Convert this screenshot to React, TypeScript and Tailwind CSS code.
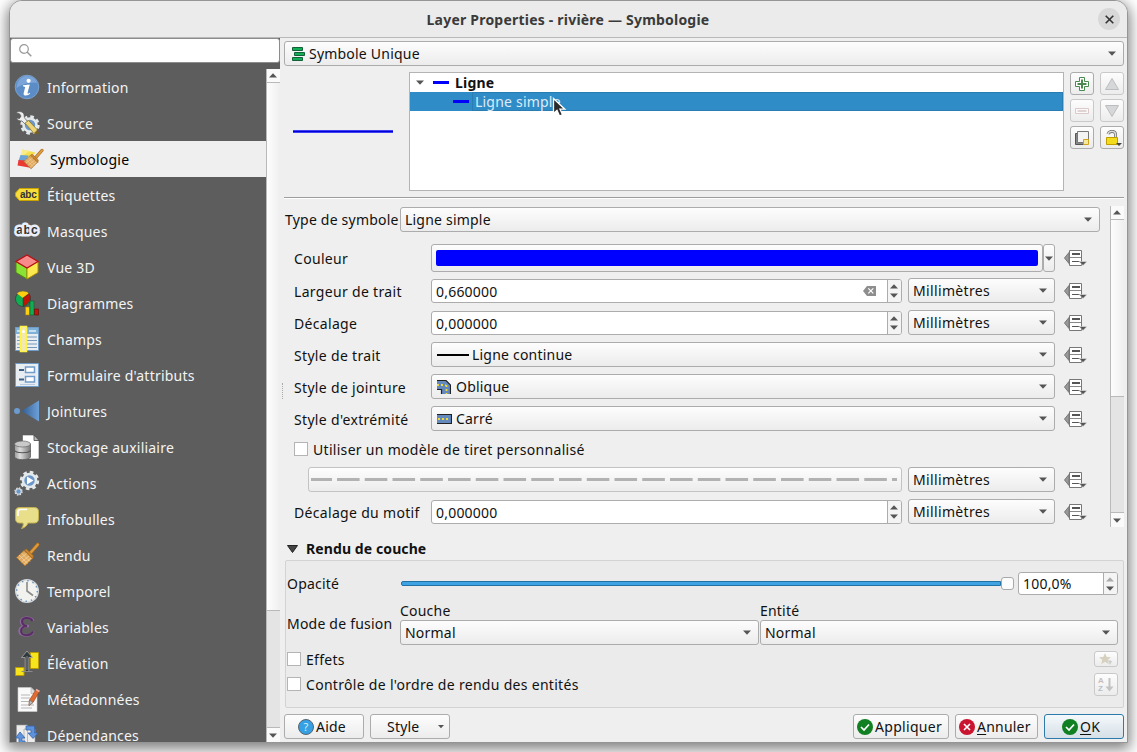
import React from "react";

const frame = "border border-[#acacac] rounded-[3px]";
const raised = "bg-gradient-to-b from-[#fdfdfd] to-[#ececec]";

function Down({ className = "" }: { className?: string }) {
  return (
    <svg className={"shrink-0 " + className} width="8" height="5" viewBox="0 0 8 5">
      <path d="M0 0.5h8L4 4.8z" fill="#555" />
    </svg>
  );
}

function Up({ className = "", fill = "#555" }: { className?: string; fill?: string }) {
  return (
    <svg className={"shrink-0 " + className} width="8" height="5" viewBox="0 0 8 5">
      <path d="M0 4.5h8L4 0.2z" fill={fill} />
    </svg>
  );
}

function Combo({ className = "", children }: { className?: string; children?: React.ReactNode }) {
  return (
    <div className={`flex h-[25px] shrink-0 items-center pl-1 pr-[7px] ${frame} ${raised} ${className}`}>
      {children}
      <Down className="ml-auto" />
    </div>
  );
}

function Spin({ className = "", value, clear, maxed }: { className?: string; value: string; clear?: boolean; maxed?: boolean }) {
  return (
    <div className={`flex shrink-0 items-stretch overflow-hidden bg-white ${frame} ${className}`}>
      <span className="flex items-center pl-1 pt-px">{value}</span>
      {clear && (
        <svg className="ml-auto mr-[11px] self-center" width="13" height="10" viewBox="0 0 13 10">
          <path d="M4 0h9v10H4L0 5z" fill="#8e8e8e" />
          <path d="M5.3 2.3l5 5M10.3 2.3l-5 5" stroke="#fff" strokeWidth="1.2" />
        </svg>
      )}
      <div className={(clear ? "" : "ml-auto ") + "flex w-[14px] flex-col items-center justify-center gap-1 border-l border-[#acacac] bg-[#f4f4f4] pr-[2px]"}>
        <Up fill={maxed ? "#aaa" : "#555"} />
        <Down />
      </div>
    </div>
  );
}

function DataDefined({ className = "mt-[2px]" }: { className?: string }) {
  return (
    <svg className={"ml-[9px] shrink-0 " + className} width="24" height="17" viewBox="0 0 24 17">
      <path d="M5 2.5L0.5 8L5 13.5z" fill="#999" stroke="#777" />
      <path d="M5.5 0.5h12v15h-12z" fill="#fff" stroke="#777" />
      <path d="M6 7.5h11" stroke="#888" />
      <path d="M8 4h8" stroke="#555" strokeWidth="2" />
      <path d="M8 11.5h8" stroke="#555" />
      <path d="M15 11.5h8L19 15.500z" fill="#555" stroke="#efefef" strokeWidth="0.5" />
    </svg>
  );
}

function Check({ label, className = "" }: { label: string; className?: string }) {
  return (
    <div className={"flex h-[14px] items-center gap-[5px] " + className}>
      <span className="h-[14px] w-[14px] border border-[#b4b4b4] bg-white" />
      <span className="pt-[2px] tracking-[0.3px]">{label}</span>
    </div>
  );
}

function Row({ label, className = "", labelClass = "pt-[3px]", children }: { label: string; className?: string; labelClass?: string; children: React.ReactNode }) {
  return (
    <div className={"flex shrink-0 items-center " + className}>
      <span className={"w-[137px] shrink-0 whitespace-nowrap tracking-[0.32px] " + labelClass}>{label}</span>
      {children}
    </div>
  );
}

function ScrollBar({ thumb }: { thumb: string }) {
  return (
    <div className="flex w-[14px] shrink-0 flex-col border-l border-[#b9b9b9] bg-[#e4e4e4]">
      <div className="flex h-[14px] shrink-0 items-center justify-center border-b border-[#b9b9b9] bg-[#fafafa] pr-px">
        <Up />
      </div>
      <div className={"shrink-0 border-b border-[#b9b9b9] bg-gradient-to-r from-[#fdfdfd] to-[#efefef] " + thumb} />
      <div className="mt-auto flex h-[15px] shrink-0 items-center justify-center border-t border-[#b9b9b9] bg-[#fafafa] pr-px">
        <Down />
      </div>
    </div>
  );
}

const gear = (
  <>
    <circle r="8.4" fill="none" stroke="#e3e8ea" strokeWidth="2.6" strokeDasharray="3.6 3" />
    <circle r="6.5" fill="#6a96c8" stroke="#e3e8ea" strokeWidth="2.6" />
  </>
);

const broom = (
  <>
    <path d="M14 11.500L22.800 1.500" stroke="#a8691c" strokeWidth="3.600" strokeLinecap="round" />
    <path d="M14 11.500L22.800 1.500" stroke="#dd9c40" strokeWidth="2.200" strokeLinecap="round" />
    <path d="M9 7.500l8.500 8-7.500 7.500-8.500-8.500z" fill="#dfa85e" stroke="#a8712b" strokeWidth="0.8" />
    <path d="M9.500 7l2-.8 6.800 6.500-.5 3z" fill="#cf8a30" stroke="#a8691c" strokeWidth="0.8" />
    <path d="M4 12l8.500 8.500M6.500 10l8.500 8.500M4 16.500l7.500-6M6.500 19l7.500-6M9 21l7-6" stroke="#f3d5a4" strokeWidth="0.7" />
  </>
);

const icons: Record<string, React.ReactNode> = {
  Information: (
    <>
      <circle cx="12" cy="12" r="11.8" fill="#5b8cc6" stroke="#81a9d8" strokeWidth="0.8" />
      <path d="M1.5 13C2 5 7 1 12 1s9 3 10 7C14 7 8 9 1.500 13z" fill="#7ba5d8" />
      <circle cx="13.6" cy="5.8" r="2.1" fill="#fff" />
      <path d="M8 10.2l6.8-.8-2.300 8.600c0 .9 1 .8 2.200-.3l.5.8c-2 2.600-7.600 2.900-6.500-.6l1.500-6-2.300-.6z" fill="#fff" />
    </>
  ),
  Source: (
    <>
      <g transform="translate(15 14)">{gear}</g>
      <path d="M1 2c3-2.500 7-1.500 8 1.500.5 2 0 3 1 4l3 3.500-2.500 2.500-3.500-3.500C5 10 2.500 9.500 1 7l3.500.5L6 5 4.500 2.800z" fill="#eee" stroke="#555" strokeWidth="0.7" />
      <path d="M10 12l3.500-2.500 9 9.500-3.500 3.500z" fill="#ecd477" stroke="#8b7628" strokeWidth="0.8" />
      <path d="M22.500 19l1.500 4-5-.5z" fill="#7a6020" />
    </>
  ),
  Symbologie: (
    <>
      <path d="M4.500 2.500l13 3-4 5-11-1z" fill="#f7e04e" />
      <path d="M4.500 2.500l7 1.500-8 5.500-1-.5z" fill="#faec8c" />
      <path d="M2.500 8l8 .5-2 6.500-8-1z" fill="#6ba3d4" />
      <path d="M.5 13l7 .5 6 7.500-8-1.500-6-1z" fill="#ea3a34" />
      <g transform="translate(4.500 2) scale(.86)">{broom}</g>
    </>
  ),
  Étiquettes: (
    <>
      <path d="M4.500 5.500h19v12h-19L0.500 13v-3z" fill="#f6dd3c" stroke="#c9a400" />
      <text x="5" y="15" fontFamily="Liberation Sans, sans-serif" fontWeight="700" fontSize="10" textLength="17" fill="#333">abc</text>
    </>
  ),
  Masques: (
    <text x="1.300" y="15" fontFamily="Liberation Sans, sans-serif" fontWeight="700" fontSize="12" letterSpacing="0" textLength="21.500" fill="#333" stroke="#e9effa" strokeWidth="5" strokeLinejoin="round" paintOrder="stroke">abc</text>
  ),
  "Vue 3D": (
    <>
      <path d="M1 6.500l11 6v11.500L1 17.500z" fill="#8ae234" stroke="#4e8a10" />
      <path d="M23 6.500l-11 6v11.500l11-6.500z" fill="#fce94f" stroke="#b09000" />
      <path d="M12 0l11 6.500-11 6.500L1 6.500z" fill="#f78b8b" stroke="#b80f14" strokeWidth="1.300" />
    </>
  ),
  Diagrammes: (
    <>
      <circle cx="8" cy="8" r="7.500" fill="#0fae53" stroke="#333" strokeWidth="0.6" />
      <path d="M8 7L2 2.500C5-.5 11-.5 14 2.500z" fill="#ffcf0f" />
      <path d="M8 7l6-4.500c3 4 1 10-6 13z" fill="#c01408" stroke="#333" strokeWidth="0.500" />
      <path d="M10.500 16h4v8h-4z" fill="#ffcf0f" stroke="#a77b00" strokeWidth="0.6" />
      <path d="M15 10h4v14h-4z" fill="#0fae53" stroke="#105a2e" strokeWidth="0.6" />
      <path d="M19.500 18h4v6h-4z" fill="#c01408" stroke="#5e0c05" strokeWidth="0.6" />
    </>
  ),
  Champs: (
    <>
      <path d="M.5.5h23v23H.5z" fill="#e8edf1" stroke="#6f9cc9" />
      <path d="M1 1h22v6H1z" fill="#7fb0d8" />
      <path d="M2 4h9M14 4h7" stroke="#c5dff0" strokeWidth="2" />
      <path d="M2 10h20M2 13.500h20M2 17h20M2 20.500h20" stroke="#7497bf" />
      <path d="M5.500-.5h6v25h-6z" fill="#f1e9b1" stroke="#fff34a" strokeWidth="1.600" />
      <circle cx="8.500" cy="4.500" r="1.500" fill="#fff" />
    </>
  ),
  "Formulaire d'attributs": (
    <>
      <path d="M.5.5h23v23H.5z" fill="#e8edf1" stroke="#6f9cc9" />
      <path d="M4 7h5M4 16.500h5" stroke="#3f5f82" strokeWidth="2.200" />
      <path d="M10.500 4h9v5.500h-9zM10.500 13.500h9V19h-9z" fill="#fff" stroke="#6f9cc9" strokeWidth="1.500" />
      <path d="M5 21.500h15" stroke="#b8cbe0" />
    </>
  ),
  Jointures: (
    <>
      <defs>
        <linearGradient id="join"><stop stopColor="#315d92" /><stop offset="1" stopColor="#6ea0d8" /></linearGradient>
      </defs>
      <circle cx="2" cy="12" r="3" fill="#6c9bd0" />
      <path d="M6.500 12L24 1.500v21z" fill="url(#join)" />
    </>
  ),
  "Stockage auxiliaire": (
    <>
      <defs>
        <linearGradient id="cyl"><stop stopColor="#999" /><stop offset=".35" stopColor="#ddd" /><stop offset="1" stopColor="#777" /></linearGradient>
      </defs>
      <path d="M7.500 0H19l5 5.500V24H7.500z" fill="#fff" stroke="#555" strokeWidth="0.6" />
      <path d="M19 0v5.500h5z" fill="#bbb" stroke="#444" strokeWidth="0.8" />
      <path d="M-.5 9v13c1 3.500 15 3.500 16 0V9z" fill="url(#cyl)" stroke="#555" strokeWidth="0.7" />
      <ellipse cx="7.500" cy="9" rx="8" ry="3" fill="#c9c9c9" stroke="#666" strokeWidth="0.7" />
      <path d="M-.5 15.500c2 3 14 3 16 0" fill="none" stroke="#555" strokeWidth="1.200" />
    </>
  ),
  Actions: (
    <>
      <g transform="translate(14.500 9.500)">{gear}</g>
      <path d="M12 5.500l6.500 4-6.500 4z" fill="#fff" />
      <g transform="translate(3.500 20.500) scale(.43)">{gear}</g>
    </>
  ),
  Infobulles: (
    <>
      <path d="M4.500.5h15c3 0 4 2 4 4v7c0 3-1.500 4.500-4 4.500H13c-1 3-4 5-6.500 5.500C8 19.500 8.500 18 8 16H4.500c-3 0-4-2-4-4.500v-7c0-2.500 1.500-4 4-4z" fill="#e9df8b" stroke="#c4b14f" />
      <path d="M3 9V5c0-1.500 1-2.500 2.500-2.500H12" fill="none" stroke="#fff" strokeWidth="1.700" />
    </>
  ),
  Rendu: broom,
  Temporel: (
    <>
      <circle cx="12" cy="12" r="11.300" fill="#f2f3ee" stroke="#d5d9dc" strokeWidth="1.400" />
      <circle cx="12" cy="12" r="10.300" fill="none" stroke="#6591bd" strokeWidth="1.500" strokeDasharray="1.400 3.990" />
      <path d="M12 3v9l6 4.500" fill="none" stroke="#8a8a8a" strokeWidth="1.600" />
    </>
  ),
  Variables: (
    <>
      <path d="M18 6c0-4-12-5-12 .5C6 9 8.500 11 12 11c-4 0-7.500 1.500-7.500 5 0 6.500 13.500 5 13.500.5M9 11h5" fill="none" stroke="#8e6a9b" strokeWidth="2.600" />
      <path d="M17.500 6c-2-4-10.500-4-10.500.5C7 9 9.500 11 12 11c-3 0-6 1.500-6 5 0 6 10 5 12 .500" fill="none" stroke="#5a2d67" strokeWidth="2" />
    </>
  ),
  Élévation: (
    <>
      <path d="M15.500 1.500h8v16h-8z" fill="#f7e41c" stroke="#b79b00" />
      <path d="M.5 16.500H9v8H.5z" fill="#f7e41c" stroke="#b79b00" />
      <path d="M10.200 20.500V6.500H6.500L12 0l5.500 6.500h-3.700v14z" fill="#30393c" stroke="#aaa" strokeWidth="0.8" />
      <path d="M12 5v14M6.500 20.500h11" stroke="#888" strokeWidth="1" />
    </>
  ),
  Métadonnées: (
    <>
      <path d="M3 .5h13l6 6V24.500H3z" fill="#fafafa" stroke="#ccc" strokeWidth="0.600" />
      <path d="M16 .5v6h6z" fill="#ddd" stroke="#aaa" strokeWidth="0.6" />
      <path d="M6 8h9M6 11h9M6 14.500h13M6 18h13M6 21h11" stroke="#b6b6b6" strokeWidth="1.200" />
      <path d="M21 2.500l3.500 2L18 15.500l-4 3 .5-5.500z" fill="#de6b31" stroke="#9b4215" strokeWidth="0.6" />
      <path d="M14.500 13l3.500 2.500-4 3z" fill="#bbb" stroke="#666" strokeWidth="0.500" />
      <path d="M21 2.500l3.500 2" stroke="#f1b2a0" strokeWidth="1.500" />
    </>
  ),
  Dépendances: (
    <>
      <path d="M1.500 2h11v19h-11zM9 6h11v18H9z" fill="#ececec" stroke="#999" strokeWidth="0.6" />
      <path d="M11 3h8.500v7h3.500l-5 5.500-5-5.500h3V7h-5z" fill="#5e93dc" stroke="#3565ad" strokeWidth="0.8" />
      <path d="M10 22.500H4V15H.5L5 9l5 6H7v3h3z" fill="#5e93dc" stroke="#3565ad" strokeWidth="0.8" />
    </>
  ),
};

const entries = Object.keys(icons);

function ToolButton({ children, faded, className = "h-[23px]" }: { children: React.ReactNode; faded?: boolean; className?: string }) {
  return (
    <div className={`flex w-6 items-center justify-center rounded-[3px] border ${raised} ${faded ? "border-[#c9c9c9]" : "border-[#acacac]"} ${className}`}>
      {children}
    </div>
  );
}

function Tick() {
  return (
    <svg width="16" height="16" viewBox="0 0 16 16">
      <circle cx="8" cy="8" r="8" fill="#118022" />
      <path d="M4 8l3 3 5-5.500" fill="none" stroke="#fff" strokeWidth="1.700" />
    </svg>
  );
}

function PushButton({ className = "", children }: { className?: string; children: React.ReactNode }) {
  return <div className={`flex h-[25px] items-center rounded-[3px] border ${className}`}>{children}</div>;
}

const plain = "border-[#acacac] bg-gradient-to-b from-[#fdfdfd] to-[#ececec]";

function Sidebar() {
  return (
    <div className="flex w-[270px] shrink-0 flex-col bg-[#5d5d5d]">
      <div className="mb-[6px] flex h-[25px] shrink-0 items-center rounded-[3px] border border-[#8c8c8c] bg-white pl-2">
        <svg width="13" height="13" viewBox="0 0 13 13">
          <circle cx="5" cy="5" r="4.300" fill="none" stroke="#999" strokeWidth="1.200" />
          <path d="M8 8l4.300 4.300" stroke="#999" strokeWidth="1.500" />
        </svg>
      </div>
      <div className="flex min-h-0 flex-1">
        <div className="min-w-0 flex-1 overflow-hidden">
          {entries.map((name) => (
            <div
              key={name}
              className={
                "flex h-9 items-center " +
                (name === "Symbologie" ? "bg-[#efefef] pl-2 text-black" : "pl-[5px] text-[#f4f4f4]")
              }
            >
              <svg className="shrink-0 overflow-visible" width="24" height="24" viewBox="0 0 24 24">
                {icons[name]}
              </svg>
              <span className="ml-2 pt-[2px] whitespace-nowrap">{name}</span>
            </div>
          ))}
        </div>
        <ScrollBar thumb="h-[528px]" />
      </div>
    </div>
  );
}

function SymbolTree() {
  return (
    <div className="mt-[6px] flex h-[119px] shrink-0">
      <div className="flex w-[125px] items-center pl-[9px]">
        <div className="h-[3px] w-[100px] border-y border-[#3f3ff4] bg-[#0000d8]" />
      </div>
      <div className="relative w-[655px] border border-[#b4b4b4] bg-white">
        <div className="flex h-[19px] items-center pl-[6px] font-bold">
          <Down />
          <div className="ml-[9px] h-[3px] w-4 bg-[#0000fa]" />
          <span className="ml-[6px]">Ligne</span>
        </div>
        <div className="flex h-[19px] items-center bg-[#308cc6] pl-[43px] text-[#dcebf6]">
          <div className="h-[3px] w-4 bg-[#0000fa]" />
          <span className="ml-[3px] flex h-full flex-1 items-center border border-[#2a7db2] pl-[2px]">Ligne simple</span>
        </div>
        <svg className="absolute left-[142px] top-[24px]" width="15" height="21" viewBox="0 0 15 21">
          <path d="M1.500 1.500v15l3.500-3.200 2.500 5.700 3-1.300-2.500-5.500h4.800z" fill="#2b2b2b" stroke="#fff" strokeWidth="1.300" />
        </svg>
      </div>
      <div className="ml-[6px] grid grid-cols-[24px_24px] content-start gap-x-[6px] gap-y-1">
        <ToolButton>
          <svg width="14" height="14" viewBox="0 0 14 14">
            <path d="M4.500.5h5v4h4v5h-4v4h-5v-4h-4v-5h4z" fill="#fff" stroke="#4b8a4f" />
            <path d="M7 2.500v9M2.500 7h9" stroke="#4b8a4f" strokeWidth="2" />
          </svg>
        </ToolButton>
        <ToolButton faded>
          <svg width="14" height="12" viewBox="0 0 14 12"><path d="M7 .5l6.500 11H.5z" fill="#d5d7d8" stroke="#bbbdbe" /></svg>
        </ToolButton>
        <ToolButton faded>
          <svg width="14" height="6" viewBox="0 0 14 6">
            <path d="M.5.5h13v5H.5z" fill="#fafafa" stroke="#dcc9c9" />
            <path d="M2.500 3h9" stroke="#dfd3d3" strokeWidth="2" />
          </svg>
        </ToolButton>
        <ToolButton faded>
          <svg width="14" height="12" viewBox="0 0 14 12"><path d="M7 11.500L.5.5h13z" fill="#d5d7d8" stroke="#bbbdbe" /></svg>
        </ToolButton>
        <ToolButton>
          <svg width="14" height="14" viewBox="0 0 14 14">
            <path d="M.5 2.500h10v11H.5z" fill="#888" stroke="#555" />
            <path d="M2.500.5h11v11h-11z" fill="#f3f3f3" stroke="#777" />
            <path d="M8.500 8.500h5v5h-5z" fill="#f5e9a0" stroke="#d0a318" />
          </svg>
        </ToolButton>
        <ToolButton>
          <svg className="ml-[2px]" width="17" height="16" viewBox="0 0 17 16">
            <path d="M3 4C4 .5 10 .5 10.500 4v4" fill="none" stroke="#777" strokeWidth="3" />
            <path d="M3 4C4 .5 10 .5 10.500 4v4" fill="none" stroke="#ddd" strokeWidth="1.400" />
            <path d="M1.500 7.500h11v7h-11z" fill="#f2dc1b" stroke="#c09e00" />
            <path d="M11 13h6l-3 3z" fill="#444" />
          </svg>
        </ToolButton>
      </div>
    </div>
  );
}

function Unit() {
  return <Combo className="ml-[6px] w-[147px] tracking-[0.35px]">Millimètres</Combo>;
}

function SymbolForm() {
  return (
    <div className="mt-[7px] flex h-[321px] shrink-0">
      <div className="flex w-[826px] flex-col pt-px">
        <div className="flex shrink-0 items-center pl-px">
          <span className="w-[115px] whitespace-nowrap">Type de symbole</span>
          <Combo className="w-[700px]">Ligne simple</Combo>
        </div>
        <div className="flex flex-col pl-[10px]">
          <Row label="Couleur" className="mt-3" labelClass="pt-px">
            <div className={`flex h-7 w-[612px] items-center px-1 ${frame} ${raised}`}>
              <div className="h-4 flex-1 rounded-[2px] bg-[#0000ff]" />
            </div>
            <div className={`flex h-7 w-3 items-center justify-center ${frame} ${raised}`}><Down /></div>
            <DataDefined className="mt-px" />
          </Row>
          <Row label="Largeur de trait" className="mt-[6px]">
            <Spin className="mt-px h-6 w-[471px]" value="0,660000" clear />
            <Unit />
            <DataDefined />
          </Row>
          <Row label="Décalage" className="mt-[7px]">
            <Spin className="mt-px h-6 w-[471px]" value="0,000000" />
            <Unit />
            <DataDefined />
          </Row>
          <Row label="Style de trait" className="mt-[7px]">
            <Combo className="w-[624px]">
              <div className="ml-px mr-[3px] h-[2px] w-8 bg-black" />
              Ligne continue
            </Combo>
            <DataDefined />
          </Row>
          <Row label="Style de jointure" className="mt-[7px]">
            <Combo className="w-[624px]">
              <svg className="ml-px mr-[5px]" width="14" height="14" viewBox="0 0 14 14">
                <path d="M0 .5h9L13.500 5v9h-9V9.500H0z" fill="#6489bd" />
                <path d="M0 .5h9L13.500 5v9M0 9.500h4.500V14" fill="none" stroke="#222" strokeWidth="1.200" />
                <path d="M0 5h8.500M9.500 5v9" fill="none" stroke="#f0d93a" strokeWidth="1.800" strokeDasharray="2 2" />
              </svg>
              Oblique
            </Combo>
            <DataDefined />
          </Row>
          <Row label="Style d'extrémité" className="mt-[7px]">
            <Combo className="w-[624px]">
              <svg className="ml-px mr-[4px]" width="15" height="10" viewBox="0 0 15 10">
                <path d="M0 .5h14.500v9H0" fill="#6489bd" stroke="#222" strokeWidth="1.200" />
                <path d="M1 5h10" stroke="#f0d93a" strokeWidth="2" strokeDasharray="2 2" />
              </svg>
              Carré
            </Combo>
            <DataDefined />
          </Row>
          <Check label="Utiliser un modèle de tiret personnalisé" className="mt-[11px]" />
          <div className="mt-[11px] flex items-center pl-[14px]">
            <div className={`flex h-[25px] w-[594px] shrink-0 items-center rounded-[3px] border border-[#c3c3c3] ${raised}`}>
              <svg width="592" height="3" viewBox="0 0 592 3">
                <path d="M2 1.500h21" stroke="#b2b2b2" strokeWidth="3" />
                <path d="M28 1.500h560" stroke="#b2b2b2" strokeWidth="3" strokeDasharray="22.600 5.150" />
              </svg>
            </div>
            <Unit />
            <DataDefined />
          </div>
          <Row label="Décalage du motif" className="mt-[7px]">
            <Spin className="mt-px h-6 w-[471px]" value="0,000000" />
            <Unit />
            <DataDefined />
          </Row>
        </div>
      </div>
      <ScrollBar thumb="h-[177px]" />
    </div>
  );
}

function LayerRendering() {
  return (
    <>
      <div className="mt-3 flex h-5 shrink-0 items-center pl-[3px] font-bold tracking-[0.1px]">
        <svg width="11" height="8" viewBox="0 0 11 8"><path d="M.5.5h10L5.500 7.500z" fill="#444" stroke="#222" /></svg>
        <span className="ml-2">Rendu de couche</span>
      </div>
      <div className="ml-px mt-px flex h-[148px] w-[839px] shrink-0 flex-col rounded-[2px] border border-[#d3d3d3] bg-[#ebebeb] pl-px pr-[5px] pt-[11px]">
        <div className="flex h-[23px] items-center">
          <span className="w-[114px]">Opacité</span>
          <div className="h-[5px] w-[600px] rounded-l-[2px] border border-[#2272a6] bg-[#3fa3e3]" />
          <div className="h-[13px] w-[13px] rounded-[3px] border border-[#a8a8a8] bg-[#fcfcfc]" />
          <Spin className="ml-1 h-[23px] w-[100px]" value="100,0%" maxed />
        </div>
        <div className="mt-[6px] flex h-[44px]">
          <span className="w-[113px] shrink-0 pt-[14px]">Mode de fusion</span>
          <div className="flex w-[360px] flex-col">
            <span className="h-[19px] leading-[20px]">Couche</span>
            <Combo className="w-[359px]">Normal</Combo>
          </div>
          <div className="flex flex-col">
            <span className="h-[19px] leading-[20px]">Entité</span>
            <Combo className="w-[358px]">Normal</Combo>
          </div>
        </div>
        <div className="mt-[6px] flex h-4 items-center justify-between">
          <Check label="Effets" />
          <ToolButton faded className="h-4">
            <svg width="14" height="12" viewBox="0 0 14 12">
              <path d="M6 0l1.700 4 4.300.2-3.300 2.700 1.100 4.300L6 8.800 2.200 11.200l1.100-4.300L0 4.200 4.300 4z" fill="#d6d1bf" />
              <path d="M9 7l4 1-2 4z" fill="#ccc" />
            </svg>
          </ToolButton>
        </div>
        <div className="mt-[6px] flex h-[23px] items-start justify-between">
          <Check label="Contrôle de l'ordre de rendu des entités" className="mt-1" />
          <ToolButton faded>
            <div className="flex flex-col font-['Liberation_Sans',sans-serif] text-[8px] leading-[8px] font-bold tracking-normal">
              <span className="text-[#cbbcbc]">A</span>
              <span className="text-[#b7bec6]">Z</span>
            </div>
            <svg className="ml-px" width="9" height="14" viewBox="0 0 9 14">
              <path d="M4.500 0v10" stroke="#c3c3c3" strokeWidth="2" />
              <path d="M.5 8.500h8l-4 5z" fill="#c3c3c3" />
            </svg>
          </ToolButton>
        </div>
      </div>
    </>
  );
}

export default function App() {
  return (
    <div className="h-[752px] w-[1137px] overflow-hidden bg-white pl-[9px] font-['Noto_Sans','Open_Sans',sans-serif] text-[14px] leading-[18px] tracking-[0.21px] text-[#111]">
      <div className="flex h-[743px] w-[1119px] flex-col overflow-hidden rounded-t-[13px] border border-[#959595] bg-[#efefef] shadow-[0_4px_14px_2px_rgba(0,0,0,0.5)]">
        <div className="flex h-[37px] shrink-0 items-center border-b border-[#b9b9b9] bg-[#ebebeb]">
          <h1 className="flex-1 pl-[28px] pt-px text-center font-bold text-[#3a3a3a]">Layer Properties - rivière — Symbologie</h1>
          <div className="mr-[7px] flex h-[22px] w-[22px] items-center justify-center rounded-full bg-[#d8d8d8]">
            <svg width="9" height="9" viewBox="0 0 9 9"><path d="M.7.7l7.600 7.600M8.300.7L.7 8.300" stroke="#333" strokeWidth="1.600" /></svg>
          </div>
        </div>
        <div className="flex min-h-0 flex-1">
          <Sidebar />
          <div className="flex w-1 shrink-0 items-center pl-[2px]">
            <div className="mt-[2px] h-4 border-l border-dotted border-[#aaa]" />
          </div>
          <main className="flex w-[840px] shrink-0 flex-col pt-[3px]">
            <Combo className="w-[840px]">
              <svg className="ml-[3px] mr-1" width="13" height="14" viewBox="0 0 13 14">
                <path d="M.5.500h10v3H.500zM2.500 5.500h10v3h-10zM.500 10.500h10v3H.500z" fill="#0fae53" stroke="#11603a" />
              </svg>
              Symbole Unique
            </Combo>
            <SymbolTree />
            <div className="mt-[6px] h-[2px] shrink-0 border-t border-[#9d9d9d] bg-white" />
            <SymbolForm />
            <LayerRendering />
            <div className="mt-[6px] flex shrink-0">
              <PushButton className={"w-20 gap-[2px] pl-[13px] " + plain}>
                <svg width="16" height="16" viewBox="0 0 16 16">
                  <circle cx="8" cy="8" r="7.500" fill="#35a1e4" stroke="#57646e" />
                  <text x="8" y="12" textAnchor="middle" fontSize="11" fill="#d6eefc">?</text>
                </svg>
                Aide
              </PushButton>
              <PushButton className={"ml-[6px] w-20 pl-4 pr-1 " + plain}>
                Style
                <Down className="ml-auto scale-75" />
              </PushButton>
              <PushButton className={"ml-auto w-24 gap-[2px] pl-[3px] tracking-[0.3px] " + plain}>
                <Tick />
                Appliquer
              </PushButton>
              <PushButton className={"ml-[6px] w-[83px] gap-[2px] pl-[3px] " + plain}>
                <svg width="16" height="16" viewBox="0 0 16 16">
                  <circle cx="8" cy="8" r="8" fill="#c9152f" />
                  <path d="M5 5l6 6M11 5l-6 6" stroke="#fff" strokeWidth="1.700" />
                </svg>
                <span><u className="underline-offset-2">A</u>nnuler</span>
              </PushButton>
              <PushButton className="ml-[6px] w-20 gap-[2px] border-[#2d7bab] bg-gradient-to-b from-[#f5f9fc] to-[#d5dfe6] pl-[17px]">
                <Tick />
                <span><u className="underline-offset-2">O</u>K</span>
              </PushButton>
            </div>
          </main>
        </div>
      </div>
    </div>
  );
}
